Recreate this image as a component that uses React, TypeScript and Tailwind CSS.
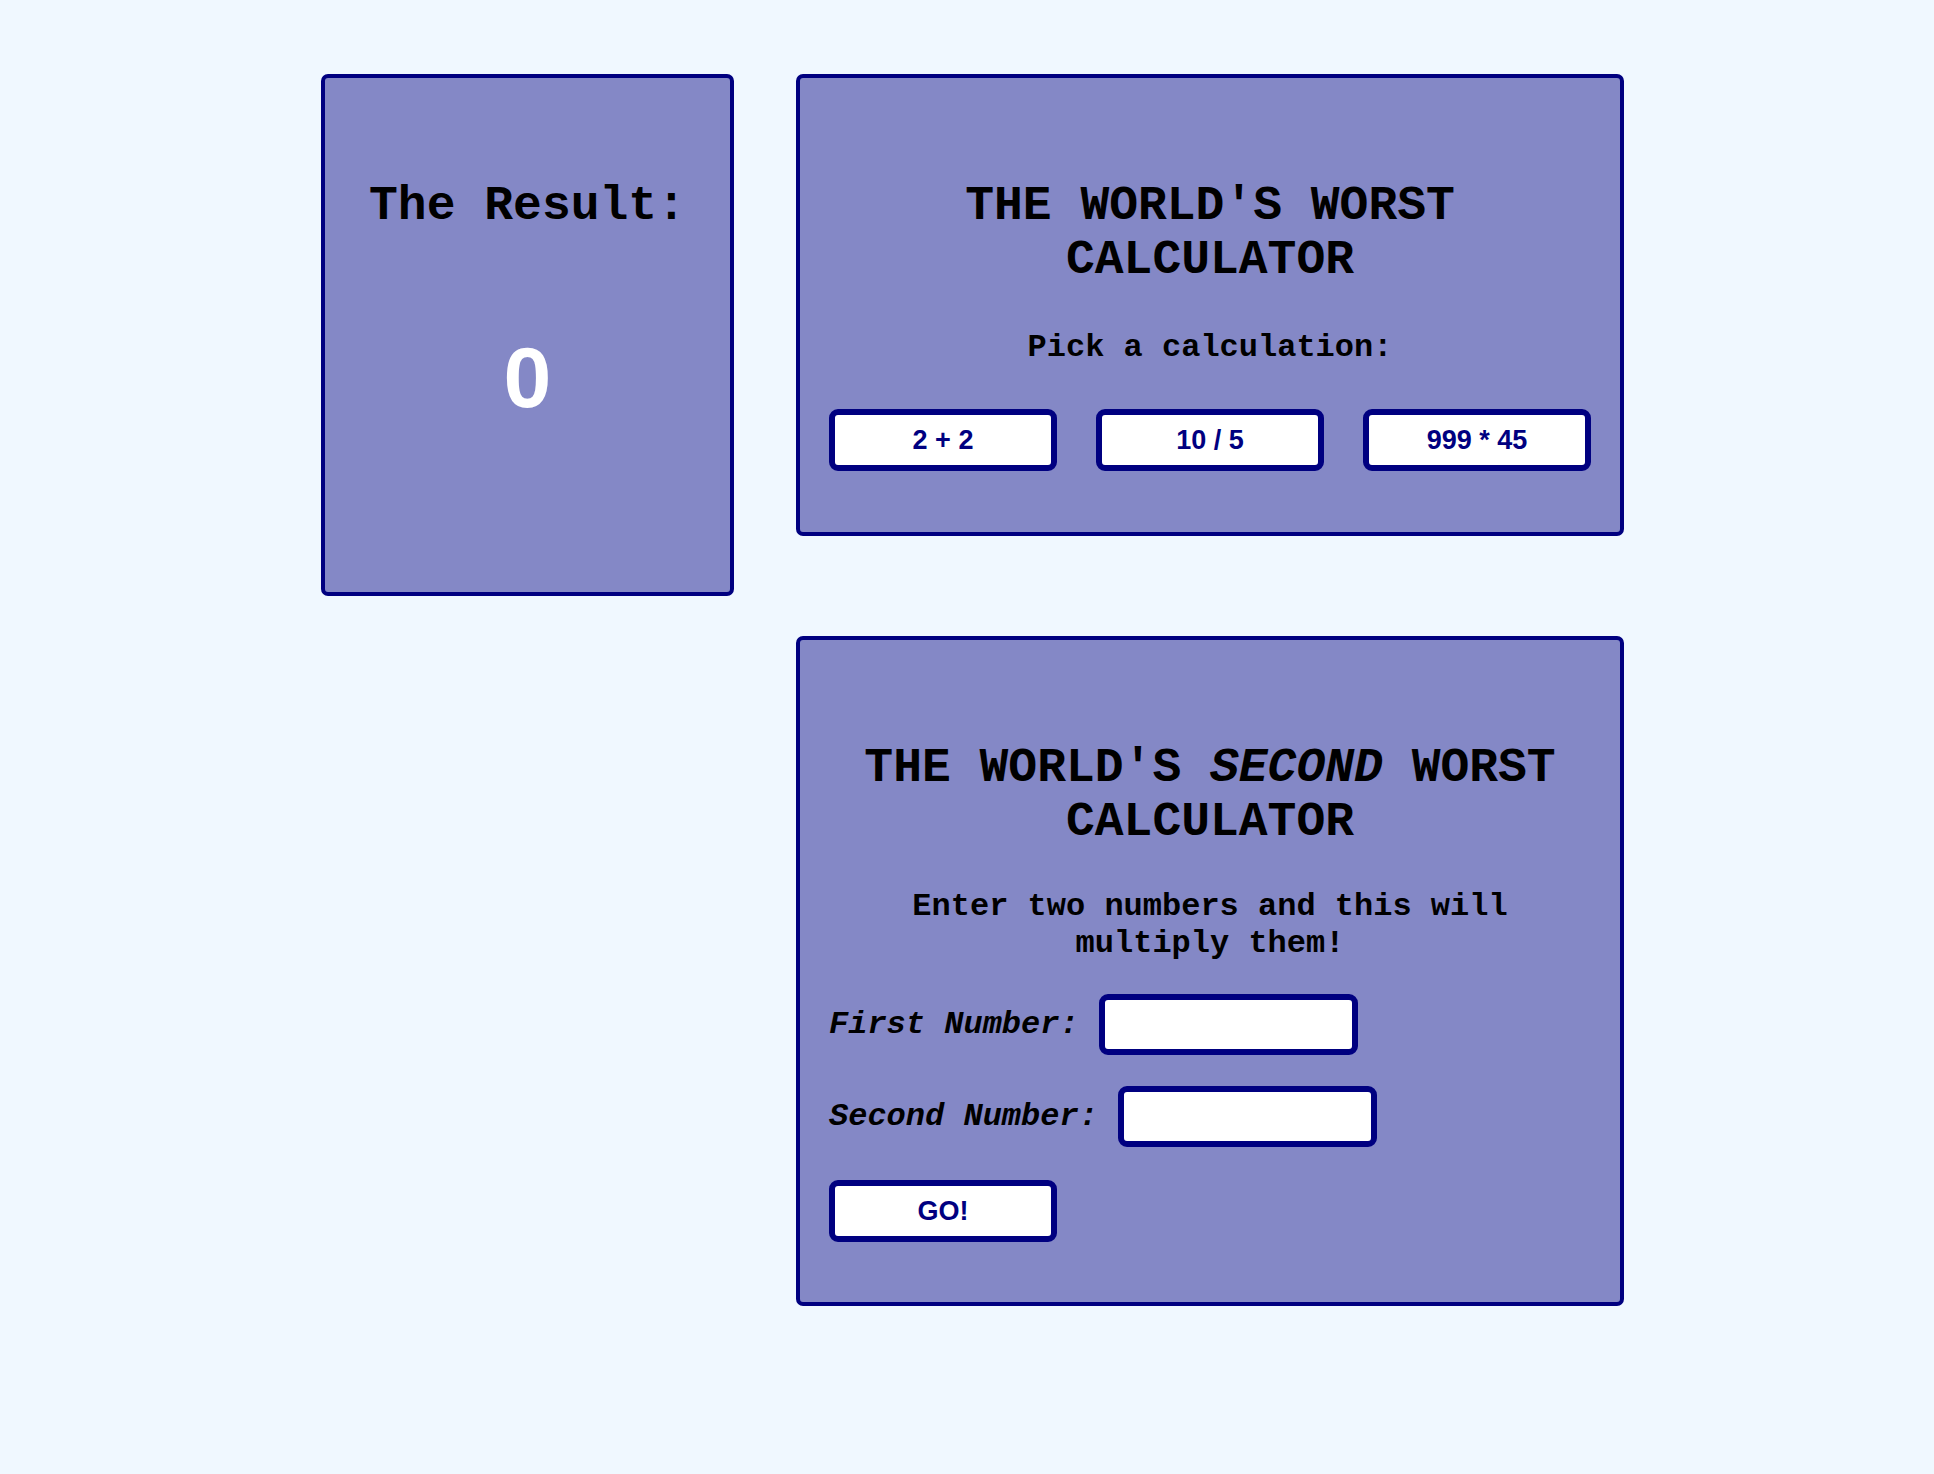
import React from "react";

const mono = "font-['Courier_New','Liberation_Mono',monospace]";
const sans = "font-['Liberation_Sans',Arial,sans-serif]";

function Btn({ children }: { children: React.ReactNode }) {
  return (
    <button
      className={`${sans} h-[62px] w-[228px] rounded-[9px] border-[6px] border-[#000080] bg-white text-[27px] font-bold text-[#000080] flex items-center justify-center`}
    >
      {children}
    </button>
  );
}

function Field({ label }: { label: string }) {
  return (
    <div className="flex items-center gap-[20px]">
      <label className={`${mono} text-[32px] leading-[36px] font-bold italic text-black`}>{label}</label>
      <input
        type="text"
        className="h-[61px] w-[259px] rounded-[9px] border-[6px] border-[#000080] bg-white outline-none"
      />
    </div>
  );
}

export default function App() {
  return (
    <div className="min-h-[1474px] w-full bg-[#f0f8ff]">
      <div className="flex items-start gap-[62px] pl-[321px] pt-[74px]">
        <div className="flex h-[522px] w-[413px] flex-col items-center rounded-[7px] border-[4px] border-[#000080] bg-[#8488c6] pt-[101px]">
          <h2 className={`${mono} text-[48px] leading-[54px] font-bold text-black`}>The Result:</h2>
          <div className={`${sans} mt-[95px] text-[86px] leading-[99px] font-bold text-white`}>0</div>
        </div>

        <div className="flex flex-col gap-[100px]">
          <div className="flex w-[828px] flex-col items-center rounded-[7px] border-[4px] border-[#000080] bg-[#8488c6] px-[29px] pt-[101px] pb-[61px]">
            <h1 className={`${mono} text-center text-[48px] leading-[54px] font-bold text-black`}>
              THE WORLD'S WORST
              <br />
              CALCULATOR
            </h1>
            <p className={`${mono} mt-[43px] text-center text-[32px] leading-[36px] font-bold text-black`}>
              Pick a calculation:
            </p>
            <div className="mt-[43px] grid w-full grid-cols-3 gap-[39px]">
              <Btn>2 + 2</Btn>
              <Btn>10 / 5</Btn>
              <Btn>999 * 45</Btn>
            </div>
          </div>

          <div className="flex w-[828px] flex-col items-center rounded-[7px] border-[4px] border-[#000080] bg-[#8488c6] px-[29px] pt-[101px] pb-[60px]">
            <h1 className={`${mono} text-center text-[48px] leading-[54px] font-bold text-black`}>
              THE WORLD'S <em className="italic">SECOND</em> WORST
              <br />
              CALCULATOR
            </h1>
            <p className={`${mono} mt-[39px] text-center text-[32px] leading-[37px] font-bold text-black`}>
              Enter two numbers and this will
              <br />
              multiply them!
            </p>
            <div className="mt-[32px] flex w-full flex-col items-start">
              <Field label="First Number:" />
              <div className="mt-[31px]">
                <Field label="Second Number:" />
              </div>
              <div className="mt-[33px]">
                <Btn>GO!</Btn>
              </div>
            </div>
          </div>
        </div>
      </div>
    </div>
  );
}
